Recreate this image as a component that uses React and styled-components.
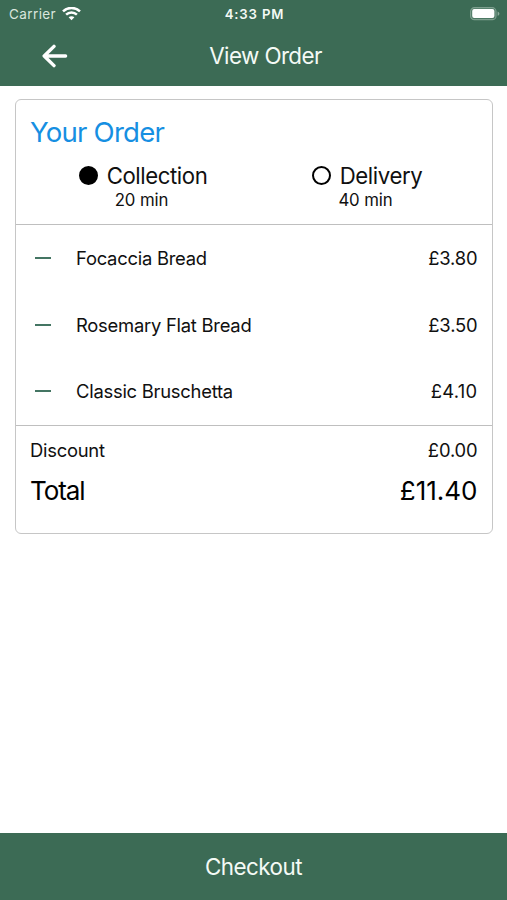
import React from "react";
import styled, { createGlobalStyle } from "styled-components";

const GREEN = "#3c6b55";

const GlobalStyle = createGlobalStyle`
  * { box-sizing: border-box; }
  body {
    margin: 0;
    background: #fff;
    color: #101010;
    font-family: Inter, "Liberation Sans", sans-serif;
  }
`;

const Screen = styled.div`
  display: flex;
  flex-direction: column;
  width: 100%;
  height: 100vh;
`;

const Header = styled.header`
  height: 86px;
  flex: none;
  background: ${GREEN};
  color: #f4faf5;
`;

const StatusBar = styled.div`
  display: grid;
  grid-template-columns: 1fr auto 1fr;
  align-items: center;
  height: 27px;
  padding: 0 7px 0 9px;
`;

const Carrier = styled.div`
  display: flex;
  align-items: center;
  gap: 6px;
  font-size: 13.5px;
  letter-spacing: 0.4px;
  color: #d9e6dd;
`;

const Clock = styled.div`
  font-size: 13.2px;
  font-weight: 600;
  letter-spacing: 0.85px;
`;

const BatteryIcon = styled.svg`
  justify-self: end;
`;

const NavBar = styled.div`
  display: grid;
  grid-template-columns: 110px 1fr 86px;
  align-items: center;
  height: 57px;
`;

const BackButton = styled.button`
  display: flex;
  justify-content: center;
  padding: 0;
  border: 0;
  background: none;
  color: #fff;
`;

const NavTitle = styled.h1`
  margin: 0;
  text-align: center;
  font-size: 22.4px;
  line-height: 28px;
  font-weight: 400;
  letter-spacing: -0.6px;
`;

const Content = styled.main`
  flex: 1;
  padding: 13px 14.5px 0 15px;
`;

const Card = styled.section`
  height: 435px;
  border: 1.5px solid #c6c6c6;
  border-radius: 6px;
`;

const CardHead = styled.div`
  height: 125px;
  padding-top: 15px;
  border-bottom: 1px solid #bfbfbf;
`;

const CardTitle = styled.h2`
  margin: 0 0 0 14px;
  font-size: 27.6px;
  line-height: 35px;
  font-weight: 400;
  letter-spacing: -0.8px;
  color: #168fe2;
`;

const Options = styled.div`
  display: grid;
  grid-template-columns: 224px 224px;
  padding: 11px 0 0 15px;
`;

const Option = styled.div`
  display: flex;
  flex-direction: column;
  align-items: center;
`;

const OptionLabel = styled.div`
  display: flex;
  align-items: center;
  gap: 9px;
  height: 28px;
  font-size: 22.2px;
  letter-spacing: -0.42px;
`;

const Radio = styled.span`
  width: 19px;
  height: 19px;
  border: 2px solid #000;
  border-radius: 50%;
  background: ${(p) => (p.$selected ? "#000" : "transparent")};
`;

const OptionTime = styled.div`
  margin-top: 1px;
  padding-right: 3px;
  font-size: 16.8px;
  letter-spacing: -0.1px;
  line-height: 20px;
`;

const Items = styled.div`
  height: 201px;
  border-bottom: 1px solid #bfbfbf;
`;

const Item = styled.div`
  display: grid;
  grid-template-columns: 60px 1fr auto;
  align-items: center;
  height: 66.5px;
  padding-right: 14px;
  font-size: 18.4px;
  letter-spacing: -0.25px;
`;

const Minus = styled.span`
  width: 16px;
  height: 2px;
  margin-left: 19px;
  background: #447563;
`;

const Price = styled.span`
  letter-spacing: ${(p) => p.$tracking || "-0.15px"};
`;

const Summary = styled.div`
  padding: 11px 14px 0;
`;

const SummaryRow = styled.div`
  display: flex;
  justify-content: space-between;
  align-items: center;
  height: ${(p) => (p.$large ? "55px" : "26px")};
  font-size: ${(p) => (p.$large ? "26px" : "18.4px")};
  letter-spacing: ${(p) => (p.$large ? "-1.1px" : "-0.25px")};
  color: ${(p) => (p.$large ? "#000" : "#101010")};
`;

const CheckoutButton = styled.button`
  height: 67px;
  flex: none;
  padding: 0;
  border: 0;
  background: ${GREEN};
  color: #f4faf5;
  font: 400 22.4px/28px Inter, "Liberation Sans", sans-serif;
  letter-spacing: -0.5px;
`;

const items = [
  { name: "Focaccia Bread", price: "£3.80" },
  { name: "Rosemary Flat Bread", price: "£3.50" },
  { name: "Classic Bruschetta", price: "£4.10", tracking: "0.3px" },
];

const options = [
  { label: "Collection", time: "20 min", selected: true },
  { label: "Delivery", time: "40 min", selected: false },
];

function Wifi() {
  return (
    <svg width="19" height="14" viewBox="0 0 19 14" fill="none" stroke="#fff" strokeWidth="2.5">
      <path d="M1 4.4C5.8-.2 13.2-.2 18 4.4" />
      <path d="M4.1 7.7c3-2.9 7.8-2.9 10.8 0" />
      <path d="M9.5 13.2 6.6 10.3c1.6-1.5 4.2-1.5 5.8 0Z" fill="#fff" stroke="none" />
    </svg>
  );
}

function Battery() {
  return (
    <BatteryIcon width="31" height="14" viewBox="0 0 31 14">
      <rect x="1.6" y="0.7" width="25.4" height="12" rx="3.8" fill="#4c7863" stroke="#7d9f8e" strokeWidth="1.2" />
      <rect x="3.2" y="2.1" width="22.2" height="9" rx="2" fill="#fff" />
      <path d="M28.6 4.4c2.4.9 2.4 3.5 0 4.4Z" fill="#8cab9b" />
    </BatteryIcon>
  );
}

function BackArrow() {
  return (
    <svg width="26" height="24" viewBox="0 0 26 24" fill="none" stroke="currentColor" strokeWidth="3.4" strokeLinecap="round" strokeLinejoin="round">
      <path d="M12 2.4 2.2 12 12 21.6M2.8 12H23.6" />
    </svg>
  );
}

export default function App() {
  return (
    <>
      <GlobalStyle />
      <Screen>
        <Header>
          <StatusBar>
            <Carrier>
              Carrier
              <Wifi />
            </Carrier>
            <Clock>4:33 PM</Clock>
            <Battery />
          </StatusBar>
          <NavBar>
            <BackButton aria-label="Back">
              <BackArrow />
            </BackButton>
            <NavTitle>View Order</NavTitle>
          </NavBar>
        </Header>
        <Content>
          <Card>
            <CardHead>
              <CardTitle>Your Order</CardTitle>
              <Options>
                {options.map((o) => (
                  <Option key={o.label}>
                    <OptionLabel>
                      <Radio $selected={o.selected} />
                      {o.label}
                    </OptionLabel>
                    <OptionTime>{o.time}</OptionTime>
                  </Option>
                ))}
              </Options>
            </CardHead>
            <Items>
              {items.map((item) => (
                <Item key={item.name}>
                  <Minus />
                  <span>{item.name}</span>
                  <Price $tracking={item.tracking}>{item.price}</Price>
                </Item>
              ))}
            </Items>
            <Summary>
              <SummaryRow>
                <span>Discount</span>
                <Price>£0.00</Price>
              </SummaryRow>
              <SummaryRow $large>
                <span>Total</span>
                <Price $tracking="0px">£11.40</Price>
              </SummaryRow>
            </Summary>
          </Card>
        </Content>
        <CheckoutButton>Checkout</CheckoutButton>
      </Screen>
    </>
  );
}
